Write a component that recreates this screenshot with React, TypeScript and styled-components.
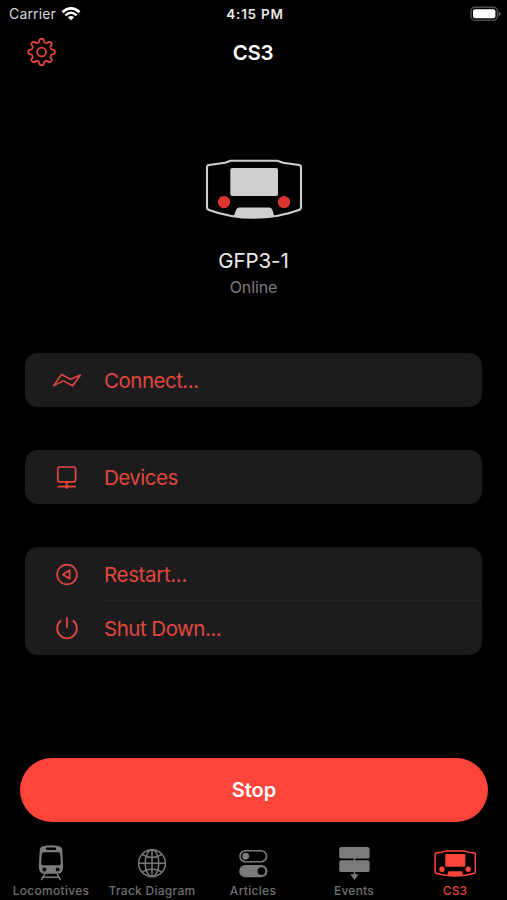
import React from "react";
import styled, { createGlobalStyle } from "styled-components";

const RED = "#e0473c";
const BRIGHT = "#ff453a";
const GREY = "#7b7b7b";

const GlobalStyle = createGlobalStyle`
  * { box-sizing: border-box; }
  body { margin: 0; background: #000; font-family: Inter, "Liberation Sans", sans-serif; }
`;

const Screen = styled.div`
  width: 507px;
  height: 900px;
  background: #000;
  overflow: hidden;
  display: flex;
  flex-direction: column;
`;

const Text = styled.span<{ $size: number; $color?: string; $weight?: number; $track?: number }>`
  font-size: ${(p) => p.$size}px;
  color: ${(p) => p.$color ?? "#fff"};
  font-weight: ${(p) => p.$weight ?? 400};
  letter-spacing: ${(p) => p.$track ?? 0}px;
  white-space: nowrap;
`;

const StatusBar = styled.header`
  height: 27px;
  flex: none;
  display: grid;
  grid-template-columns: 1fr auto 1fr;
  align-items: center;
  padding: 0 6px 0 9px;
  line-height: 28px;
`;

const StatusLeft = styled.div`
  display: flex;
  align-items: center;
  gap: 5px;
`;

const StatusRight = styled.div`
  display: flex;
  justify-content: flex-end;
`;

const NavBar = styled.nav`
  height: 50px;
  flex: none;
  display: grid;
  grid-template-columns: 1fr auto 1fr;
  align-items: center;
  padding: 0 27px 0 26px;
`;

const IconButton = styled.button`
  width: 30px;
  height: 30px;
  padding: 0;
  border: 0;
  background: none;
  display: flex;
`;

const Hero = styled.section`
  height: 276px;
  flex: none;
  display: flex;
  flex-direction: column;
  align-items: center;
  padding-top: 81px;
`;

const DeviceName = styled.div`
  margin-top: 26px;
  height: 29px;
  line-height: 30px;
`;

const DeviceStatus = styled.div`
  height: 24px;
  line-height: 24px;
`;

const Groups = styled.main`
  display: flex;
  flex-direction: column;
  gap: 43px;
  padding: 0 25px;
  flex: 1;
`;

const Group = styled.section`
  background: #1c1c1e;
  border-radius: 13px;
  overflow: hidden;
`;

const Row = styled.button`
  width: 100%;
  height: 54px;
  border: 0;
  padding: 0;
  background: none;
  font: inherit;
  display: grid;
  grid-template-columns: 26px 32px 21px 1fr;
  align-items: center;
  text-align: left;
`;

const RowIcon = styled.span`
  grid-column: 2;
  width: 32px;
  height: 30px;
  display: flex;
`;

const RowLabel = styled.span<{ $divided?: boolean }>`
  grid-column: 4;
  height: 54px;
  line-height: 56px;
  box-shadow: ${(p) => (p.$divided ? "inset 0 -1px #252527" : "none")};
`;

const StopButton = styled.button`
  margin: 0 19px 0 20px;
  height: 64px;
  flex: none;
  border: 0;
  border-radius: 32px;
  background: ${BRIGHT};
  font: inherit;
  line-height: 65px;
  padding: 0;
`;

const TabBar = styled.nav`
  height: 78px;
  flex: none;
  display: grid;
  grid-template-columns: repeat(5, 101px);
  justify-content: center;
  padding: 20px 1px 0 0;
`;

const Tab = styled.div`
  display: flex;
  flex-direction: column;
  align-items: center;
  line-height: 14px;
`;

const TabIcon = styled.span`
  height: 42px;
  display: flex;
`;

const Wifi = () => (
  <svg width="20" height="16" viewBox="61 5 20 16" fill="none" stroke="#fff">
    <path d="M62.5 11.2Q71 3.6 79.5 11.2" strokeWidth="2.7" />
    <path d="M65.4 14.3Q71 9.2 76.6 14.3" strokeWidth="2.5" />
    <path d="M71 19.3L67.9 16.2Q71 13.6 74.1 16.2Z" fill="#fff" stroke="none" />
  </svg>
);

const Battery = () => (
  <svg width="31" height="16" viewBox="470 5 31 16">
    <rect x="471" y="6.2" width="26.4" height="13" rx="4" fill="none" stroke="#4c4c4c" strokeWidth="1.5" />
    <rect x="473" y="8.2" width="22.4" height="9" rx="2" fill="#fff" />
    <path d="M498.7 10.8v4.4q2-.6 2-2.2t-2-2.2" fill="#666" />
  </svg>
);

const gearPath = (() => {
  const n = 160;
  const points: string[] = [];
  for (let i = 0; i < n; i++) {
    const a = (i / n) * Math.PI * 2;
    const wave = Math.tanh(2 * Math.cos(8 * a)) / Math.tanh(2);
    const r = 11.6 + 1.65 * wave;
    points.push(`${(15 + r * Math.sin(a)).toFixed(2)} ${(15 - r * Math.cos(a)).toFixed(2)}`);
  }
  return `M${points.join("L")}Z`;
})();

const Gear = () => (
  <svg width="30" height="30" viewBox="-0.6 0 30 30" fill="none" stroke={RED} strokeWidth="1.8">
    <path d={gearPath} strokeLinejoin="round" />
    <circle cx="15" cy="15" r="4.4" />
  </svg>
);

const Controller = () => (
  <svg width="98" height="62" viewBox="205 158 98 62">
    <path
      d="M209 165L225 162.8Q228 161.5 230.5 160.7H277.5Q280 161.5 283 162.8L299 165Q301 165.3 301 167.3V207Q301 209.3 299 210Q278 217.8 254 217.8T209 210Q207 209.3 207 207V167.3Q207 165.3 209 165Z"
      fill="none"
      stroke="#cfcfcf"
      strokeWidth="2.1"
    />
    <rect x="230.3" y="168" width="47.7" height="28" rx="2" fill="#cfcfcf" />
    <circle cx="224" cy="202.1" r="6.2" fill="#d93430" />
    <circle cx="284" cy="202.1" r="6.2" fill="#d93430" />
    <path d="M239 207.5H269.5Q271.5 207.5 272.5 210L274.2 216.3Q254 219 233.8 216.3L236 210Q237 207.5 239 207.5Z" fill="#cfcfcf" />
  </svg>
);

const Bolt = () => (
  <svg width="32" height="30" viewBox="51 366 32 30" fill="none" stroke={RED} strokeWidth="1.6" strokeLinejoin="round">
    <path d="M53.7 386.6L61.6 375.4L70.4 380.3L80.4 376L72.7 386.8L63.4 381.9Z" />
  </svg>
);

const Monitor = () => (
  <svg width="32" height="30" viewBox="51 462 32 30" fill="none" stroke={RED} strokeWidth="1.7">
    <rect x="57.8" y="467" width="17.8" height="14.8" rx="2" />
    <path d="M66.7 482V486M57.6 486.7H75.8" />
    <circle cx="66.7" cy="486.7" r="2.1" fill={RED} stroke="none" />
  </svg>
);

const RestartIcon = () => (
  <svg width="32" height="30" viewBox="51 559 32 30" fill="none" stroke={RED} strokeWidth="1.7" strokeLinejoin="round">
    <circle cx="67" cy="574.5" r="9.9" />
    <path d="M62.8 574.5L69.7 570.2V578.8Z" />
  </svg>
);

const Power = () => (
  <svg width="32" height="30" viewBox="51 613 32 30" fill="none" stroke={RED} strokeWidth="1.8" strokeLinecap="round">
    <path d="M60.7 620.8A9.9 9.9 0 1 0 73.3 620.8M67 618V627.3" />
  </svg>
);

const Train = () => (
  <svg width="30" height="40" viewBox="36 842 30 40">
    <path
      fillRule="evenodd"
      fill={GREY}
      d="M43 846.3Q51 844.3 59 846.3Q62 847 62.3 850L63.2 866Q63.4 873.7 57.5 873.7H44.5Q38.6 873.7 38.8 866L39.7 850Q40 847 43 846.3ZM47 847.6Q45.8 847.6 45.8 848.8T47 850H55Q56.2 850 56.2 848.8T55 847.6ZM44 852.2Q42 852.2 41.8 854L41.2 863Q41.1 865.2 43.2 865.2H58.8Q60.9 865.2 60.8 863L60.2 854Q60 852.2 58 852.2ZM44.4 867.5A2 2 0 1 0 44.4 871.5A2 2 0 1 0 44.4 867.5ZM57.6 867.5A2 2 0 1 0 57.6 871.5A2 2 0 1 0 57.6 867.5Z"
    />
    <path d="M45 873.5L41.4 880.2M57 873.5L60.6 880.2M43.5 877.3H58.5" fill="none" stroke={GREY} strokeWidth="1.5" />
  </svg>
);

const Globe = () => (
  <svg width="32" height="40" viewBox="137 842 32 40" fill="none" stroke={GREY} strokeWidth="1.5">
    <circle cx="153" cy="863.2" r="13.4" />
    <ellipse cx="153" cy="863.2" rx="6.8" ry="13.4" />
    <path d="M153 850V876.5M139.6 863.2H166.4M143.2 854.3Q153 860.7 162.8 854.3M143.2 872.1Q153 865.7 162.8 872.1" />
  </svg>
);

const Toggles = () => (
  <svg width="32" height="40" viewBox="237 842 32 40">
    <rect x="240" y="850.7" width="26.5" height="11" rx="5.5" fill="none" stroke={GREY} strokeWidth="1.6" />
    <circle cx="245.7" cy="856.2" r="3.4" fill={GREY} />
    <rect x="239.2" y="865" width="28.2" height="12.3" rx="6.15" fill={GREY} />
    <circle cx="261.4" cy="871.1" r="3.9" fill="#000" />
  </svg>
);

const EventsIcon = () => (
  <svg width="34" height="40" viewBox="337 842 34 40" fill={GREY}>
    <rect x="339.2" y="847" width="30.4" height="11.6" rx="2.2" />
    <rect x="339.2" y="860.3" width="30.4" height="11.8" rx="2.2" />
    <path d="M353.7 858H355.3V861H353.7ZM353.7 872H355.3V874.3H358.7L354.5 880L350.2 874.3H353.7Z" />
  </svg>
);

const MiniController = () => (
  <svg width="44" height="40" viewBox="434 842 44 40" fill={BRIGHT}>
    <path
      d="M437 853L443 852.3L446.8 850.9H465.7L469.5 852.3L475.5 853Q476.3 853.2 476.3 854V872Q476.3 873 475.5 873.3Q466 876.1 456.2 876.1T437 873.3Q436.1 873 436.1 872V854Q436.1 853.2 437 853Z"
      fill="none"
      stroke={BRIGHT}
      strokeWidth="1.5"
    />
    <rect x="446.3" y="854" width="20" height="12.7" rx="1" />
    <circle cx="443" cy="869.3" r="2.7" />
    <circle cx="469.2" cy="869.3" r="2.7" />
    <path d="M449.5 871.2H462.8L464.3 875.5Q456 876.8 448 875.5Z" />
  </svg>
);

const groups = [
  [{ label: "Connect...", icon: <Bolt />, track: -0.5 }],
  [{ label: "Devices", icon: <Monitor />, track: -0.5 }],
  [
    { label: "Restart...", icon: <RestartIcon />, track: -0.35 },
    { label: "Shut Down...", icon: <Power />, track: -0.5 },
  ],
];

const tabs = [
  { label: "Locomotives", icon: <Train />, track: 0.3 },
  { label: "Track Diagram", icon: <Globe />, track: 0.27 },
  { label: "Articles", icon: <Toggles />, track: 0.3 },
  { label: "Events", icon: <EventsIcon />, track: 0.25 },
  { label: "CS3", icon: <MiniController />, track: 0.1, active: true },
];

export default function App() {
  return (
    <Screen>
      <GlobalStyle />
      <StatusBar>
        <StatusLeft>
          <Text $size={14} $color="#d8d8d8" $track={0.15}>Carrier</Text>
          <Wifi />
        </StatusLeft>
        <Text $size={13.5} $color="#e8e8e8" $weight={600} $track={0.75}>4:15 PM</Text>
        <StatusRight><Battery /></StatusRight>
      </StatusBar>
      <NavBar>
        <IconButton aria-label="Settings"><Gear /></IconButton>
        <Text $size={20.5} $weight={600} $track={-0.3}>CS3</Text>
      </NavBar>
      <Hero>
        <Controller />
        <DeviceName><Text $size={20.5} $color="#ededed" $track={-0.1}>GFP3-1</Text></DeviceName>
        <DeviceStatus><Text $size={16} $color="#7c7c7c" $track={-0.1}>Online</Text></DeviceStatus>
      </Hero>
      <Groups>
        {groups.map((rows, i) => (
          <Group key={i}>
            {rows.map((row, j) => (
              <Row key={row.label}>
                <RowIcon>{row.icon}</RowIcon>
                <RowLabel $divided={j < rows.length - 1}>
                  <Text $size={20.5} $color={RED} $track={row.track}>{row.label}</Text>
                </RowLabel>
              </Row>
            ))}
          </Group>
        ))}
      </Groups>
      <StopButton><Text $size={20} $weight={600}>Stop</Text></StopButton>
      <TabBar>
        {tabs.map((tab) => (
          <Tab key={tab.label}>
            <TabIcon>{tab.icon}</TabIcon>
            <Text $size={12} $weight={500} $color={tab.active ? "#e2443a" : "#707070"} $track={tab.track}>
              {tab.label}
            </Text>
          </Tab>
        ))}
      </TabBar>
    </Screen>
  );
}
